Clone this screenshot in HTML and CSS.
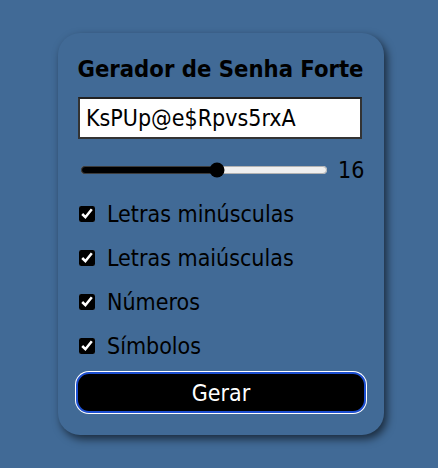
FILE: index.html
```html
<!DOCTYPE html>
<html lang="pt">
<head>
<meta charset="utf-8">
<link rel="stylesheet" href="styles.css">
</head>
<body>
<div class="card">
  <h1 class="title">Gerador de Senha Forte</h1>
  <input class="pass" type="text" value="KsPUp@e$Rpvs5rxA" readonly>
  <div class="range-row">
    <input class="range" type="range" min="6" max="24" value="16">
    <span class="len">16</span>
  </div>
  <label class="opt"><input type="checkbox" checked><span>Letras minúsculas</span></label>
  <label class="opt"><input type="checkbox" checked><span>Letras maiúsculas</span></label>
  <label class="opt"><input type="checkbox" checked><span>Números</span></label>
  <label class="opt"><input type="checkbox" checked><span>Símbolos</span></label>
  <button class="btn">Gerar</button>
</div>
</body>
</html>
```
FILE: styles.css
```css
html, body {
  margin: 0;
  padding: 0;
  background: #416a96;
  font-family: "DejaVu Sans Condensed", "DejaVu Sans", sans-serif;
  font-stretch: condensed;
  color: #000;
}
body {
  padding: 33px 0 0 58px;
  height: 468px;
  box-sizing: border-box;
}
.card {
  width: 326px;
  height: 402px;
  box-sizing: border-box;
  background: #416a96;
  border-radius: 22px;
  box-shadow: 3px 4px 9px rgba(0, 0, 0, 0.6);
  padding: 20px;
  display: flex;
  flex-direction: column;
}
.title {
  margin: 0 0 0 -1px;
  font-size: 23.6px;
  font-weight: bold;
  line-height: 32px;
  text-align: center;
  white-space: nowrap;
}
.pass {
  margin-top: 12px;
  width: 284px;
  height: 42px;
  box-sizing: border-box;
  font-family: inherit;
  font-stretch: condensed;
  font-size: 23px;
  padding: 4px 6px;
  border: 2px solid #333;
  border-top-color: #222;
  background: #fff;
  color: #000;
  outline: none;
}
.range-row {
  margin-top: 10px;
  display: flex;
  align-items: center;
  gap: 10px;
  height: 42px;
}
.range {
  flex: 1;
  margin: 0 0 0 2px;
  accent-color: #000;
}
.len {
  font-size: 23px;
  width: 26px;
}
.opt {
  display: flex;
  align-items: center;
  gap: 12px;
  height: 44px;
  font-size: 23px;
  padding-top: 1px;
  box-sizing: border-box;
}
.opt input {
  margin: 0 0 0 1px;
  width: 16px;
  height: 16px;
  accent-color: #000;
}
.btn {
  margin-top: 5px;
  width: 290px;
  margin-left: -2px;
  height: 41px;
  background: #000;
  color: #fff;
  font-family: inherit;
  font-stretch: condensed;
  font-size: 23px;
  border: 2px solid #1d4fd0;
  border-radius: 13px;
  box-shadow: 0 0 0 1px #fff;
}
```
